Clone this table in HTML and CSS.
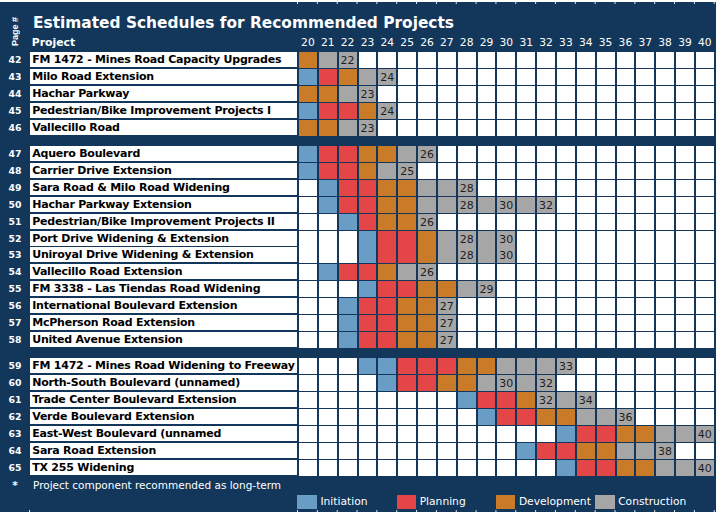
FILE: index.html
```html
<!DOCTYPE html>
<html lang="en">
<head>
<meta charset="utf-8">
<title>Estimated Schedules for Recommended Projects</title>
<link rel="stylesheet" href="styles.css">
</head>
<body>
<div class="topbar"><div class="ticks"></div></div>

<div class="head">
  <div class="pagehdr">Page #</div>
  <h1 class="title">Estimated Schedules for Recommended Projects</h1>
  <div class="hrow">
    <div class="hproj">Project</div>
    <div class="years">
      <span>20</span><span>21</span><span>22</span><span>23</span><span>24</span><span>25</span><span>26</span><span>27</span><span>28</span><span>29</span><span>30</span><span>31</span><span>32</span><span>33</span><span>34</span><span>35</span><span>36</span><span>37</span><span>38</span><span>39</span><span>40</span>
    </div>
  </div>
</div>

<div class="group">
  <div class="row"><span class="pg">42</span><span class="name">FM 1472 - Mines Road Capacity Upgrades</span><div class="cells"><i class="o"></i><i class="g"></i><i class="g">22</i><i></i><i></i><i></i><i></i><i></i><i></i><i></i><i></i><i></i><i></i><i></i><i></i><i></i><i></i><i></i><i></i><i></i><i></i></div></div>
  <div class="row"><span class="pg">43</span><span class="name">Milo Road Extension</span><div class="cells"><i class="b"></i><i class="r"></i><i class="o"></i><i class="g"></i><i class="g">24</i><i></i><i></i><i></i><i></i><i></i><i></i><i></i><i></i><i></i><i></i><i></i><i></i><i></i><i></i><i></i><i></i></div></div>
  <div class="row"><span class="pg">44</span><span class="name">Hachar Parkway</span><div class="cells"><i class="o"></i><i class="o"></i><i class="g"></i><i class="g">23</i><i></i><i></i><i></i><i></i><i></i><i></i><i></i><i></i><i></i><i></i><i></i><i></i><i></i><i></i><i></i><i></i><i></i></div></div>
  <div class="row"><span class="pg">45</span><span class="name">Pedestrian/Bike Improvement Projects I</span><div class="cells"><i class="b"></i><i class="r"></i><i class="r"></i><i class="o"></i><i class="g">24</i><i></i><i></i><i></i><i></i><i></i><i></i><i></i><i></i><i></i><i></i><i></i><i></i><i></i><i></i><i></i><i></i></div></div>
  <div class="row"><span class="pg">46</span><span class="name">Vallecillo Road</span><div class="cells"><i class="o"></i><i class="o"></i><i class="g"></i><i class="g">23</i><i></i><i></i><i></i><i></i><i></i><i></i><i></i><i></i><i></i><i></i><i></i><i></i><i></i><i></i><i></i><i></i><i></i></div></div>
</div>

<div class="group">
  <div class="row"><span class="pg">47</span><span class="name">Aquero Boulevard</span><div class="cells"><i class="b"></i><i class="r"></i><i class="r"></i><i class="o"></i><i class="o"></i><i class="g"></i><i class="g">26</i><i></i><i></i><i></i><i></i><i></i><i></i><i></i><i></i><i></i><i></i><i></i><i></i><i></i><i></i></div></div>
  <div class="row"><span class="pg">48</span><span class="name">Carrier Drive Extension</span><div class="cells"><i class="b"></i><i class="r"></i><i class="r"></i><i class="o"></i><i class="g"></i><i class="g">25</i><i></i><i></i><i></i><i></i><i></i><i></i><i></i><i></i><i></i><i></i><i></i><i></i><i></i><i></i><i></i></div></div>
  <div class="row"><span class="pg">49</span><span class="name">Sara Road &amp; Milo Road Widening</span><div class="cells"><i></i><i class="b"></i><i class="r"></i><i class="r"></i><i class="o"></i><i class="o"></i><i class="g"></i><i class="g"></i><i class="g">28</i><i></i><i></i><i></i><i></i><i></i><i></i><i></i><i></i><i></i><i></i><i></i><i></i></div></div>
  <div class="row"><span class="pg">50</span><span class="name">Hachar Parkway Extension</span><div class="cells"><i></i><i class="b"></i><i class="r"></i><i class="r"></i><i class="o"></i><i class="o"></i><i class="g"></i><i class="g"></i><i class="g">28</i><i class="g"></i><i class="g">30</i><i class="g"></i><i class="g">32</i><i></i><i></i><i></i><i></i><i></i><i></i><i></i><i></i></div></div>
  <div class="row"><span class="pg">51</span><span class="name">Pedestrian/Bike Improvement Projects II</span><div class="cells"><i></i><i></i><i class="b"></i><i class="r"></i><i class="o"></i><i class="o"></i><i class="g">26</i><i></i><i></i><i></i><i></i><i></i><i></i><i></i><i></i><i></i><i></i><i></i><i></i><i></i><i></i></div></div>
  <div class="row"><span class="pg">52</span><span class="name">Port Drive Widening &amp; Extension</span><div class="cells"><i></i><i></i><i></i><i class="b"></i><i class="r"></i><i class="r"></i><i class="o"></i><i class="g"></i><i class="g">28</i><i class="g"></i><i class="g">30</i><i></i><i></i><i></i><i></i><i></i><i></i><i></i><i></i><i></i><i></i></div></div>
  <div class="row"><span class="pg">53</span><span class="name">Uniroyal Drive Widening &amp; Extension</span><div class="cells"><i></i><i></i><i></i><i class="b"></i><i class="r"></i><i class="r"></i><i class="o"></i><i class="g"></i><i class="g">28</i><i class="g"></i><i class="g">30</i><i></i><i></i><i></i><i></i><i></i><i></i><i></i><i></i><i></i><i></i></div></div>
  <div class="row"><span class="pg">54</span><span class="name">Vallecillo Road Extension</span><div class="cells"><i></i><i class="b"></i><i class="r"></i><i class="r"></i><i class="o"></i><i class="g"></i><i class="g">26</i><i></i><i></i><i></i><i></i><i></i><i></i><i></i><i></i><i></i><i></i><i></i><i></i><i></i><i></i></div></div>
  <div class="row"><span class="pg">55</span><span class="name">FM 3338 - Las Tiendas Road Widening</span><div class="cells"><i></i><i></i><i></i><i class="b"></i><i class="r"></i><i class="r"></i><i class="o"></i><i class="o"></i><i class="g"></i><i class="g">29</i><i></i><i></i><i></i><i></i><i></i><i></i><i></i><i></i><i></i><i></i><i></i></div></div>
  <div class="row"><span class="pg">56</span><span class="name">International Boulevard Extension</span><div class="cells"><i></i><i></i><i class="b"></i><i class="r"></i><i class="r"></i><i class="o"></i><i class="o"></i><i class="g">27</i><i></i><i></i><i></i><i></i><i></i><i></i><i></i><i></i><i></i><i></i><i></i><i></i><i></i></div></div>
  <div class="row"><span class="pg">57</span><span class="name">McPherson Road Extension</span><div class="cells"><i></i><i></i><i class="b"></i><i class="r"></i><i class="r"></i><i class="o"></i><i class="o"></i><i class="g">27</i><i></i><i></i><i></i><i></i><i></i><i></i><i></i><i></i><i></i><i></i><i></i><i></i><i></i></div></div>
  <div class="row"><span class="pg">58</span><span class="name">United Avenue Extension</span><div class="cells"><i></i><i></i><i class="b"></i><i class="r"></i><i class="r"></i><i class="o"></i><i class="o"></i><i class="g">27</i><i></i><i></i><i></i><i></i><i></i><i></i><i></i><i></i><i></i><i></i><i></i><i></i><i></i></div></div>
</div>

<div class="group">
  <div class="row"><span class="pg">59</span><span class="name">FM 1472 - Mines Road Widening to Freeway</span><div class="cells"><i></i><i></i><i></i><i class="b"></i><i class="b"></i><i class="r"></i><i class="r"></i><i class="r"></i><i class="o"></i><i class="o"></i><i class="g"></i><i class="g"></i><i class="g"></i><i class="g">33</i><i></i><i></i><i></i><i></i><i></i><i></i><i></i></div></div>
  <div class="row"><span class="pg">60</span><span class="name">North-South Boulevard (unnamed)</span><div class="cells"><i></i><i></i><i></i><i></i><i class="b"></i><i class="r"></i><i class="r"></i><i class="o"></i><i class="o"></i><i class="g"></i><i class="g">30</i><i class="g"></i><i class="g">32</i><i></i><i></i><i></i><i></i><i></i><i></i><i></i><i></i></div></div>
  <div class="row"><span class="pg">61</span><span class="name">Trade Center Boulevard Extension</span><div class="cells"><i></i><i></i><i></i><i></i><i></i><i></i><i></i><i></i><i class="b"></i><i class="r"></i><i class="r"></i><i class="o"></i><i class="g">32</i><i class="g"></i><i class="g">34</i><i></i><i></i><i></i><i></i><i></i><i></i></div></div>
  <div class="row"><span class="pg">62</span><span class="name">Verde Boulevard Extension</span><div class="cells"><i></i><i></i><i></i><i></i><i></i><i></i><i></i><i></i><i></i><i class="b"></i><i class="r"></i><i class="r"></i><i class="o"></i><i class="o"></i><i class="g"></i><i class="g"></i><i class="g">36</i><i></i><i></i><i></i><i></i></div></div>
  <div class="row"><span class="pg">63</span><span class="name">East-West Boulevard (unnamed</span><div class="cells"><i></i><i></i><i></i><i></i><i></i><i></i><i></i><i></i><i></i><i></i><i></i><i></i><i></i><i class="b"></i><i class="r"></i><i class="r"></i><i class="o"></i><i class="o"></i><i class="g"></i><i class="g"></i><i class="g">40</i></div></div>
  <div class="row"><span class="pg">64</span><span class="name">Sara Road Extension</span><div class="cells"><i></i><i></i><i></i><i></i><i></i><i></i><i></i><i></i><i></i><i></i><i></i><i class="b"></i><i class="r"></i><i class="r"></i><i class="o"></i><i class="o"></i><i class="g"></i><i class="g"></i><i class="g">38</i><i></i><i></i></div></div>
  <div class="row"><span class="pg">65</span><span class="name">TX 255 Widening</span><div class="cells"><i></i><i></i><i></i><i></i><i></i><i></i><i></i><i></i><i></i><i></i><i></i><i></i><i></i><i class="b"></i><i class="r"></i><i class="r"></i><i class="o"></i><i class="o"></i><i class="g"></i><i class="g"></i><i class="g">40</i></div></div>
</div>

<div class="foot"><span class="star">*</span><span class="note">Project component recommended as long-term</span></div>

<div class="legend">
  <div class="item"><span class="sw b"></span>Initiation</div>
  <div class="item"><span class="sw r"></span>Planning</div>
  <div class="item"><span class="sw o"></span>Development</div>
  <div class="item"><span class="sw g"></span>Construction</div>
</div>

<div class="bottombar"><div class="ticks"></div></div>
</body>
</html>
```

FILE: styles.css
```css
* {
  box-sizing: border-box;
  margin: 0;
  padding: 0;
}

html,
body {
  width: 716px;
  height: 512px;
  overflow: hidden;
}

body {
  background: #12375b;
  color: #fff;
  font-family: "DejaVu Sans", sans-serif;
  display: flex;
  flex-direction: column;
}

/* top and bottom edge strips */
.topbar {
  height: 4px;
  padding: 2px 0 0 297.3px;
  background: linear-gradient(#fff, #fff) 0 0 / 100% 2px no-repeat;
  flex: none;
}

.ticks {
  height: 2px;
  background: linear-gradient(to right, #dde5ee 0 1px, transparent 1px) 0 0 / 19.85px 2px repeat-x;
}

.bottombar {
  margin-top: auto;
  height: 2px;
  padding-left: 297.3px;
  background: linear-gradient(#dde5ee, #dde5ee) 29px 0 / 1px 2px no-repeat;
  flex: none;
}

/* heading */
.head {
  display: grid;
  grid-template-columns: 30px 1fr;
  grid-template-rows: 27.7px 20.6px;
  flex: none;
}

.pagehdr {
  grid-row: 1 / 3;
  grid-column: 1;
  writing-mode: vertical-rl;
  transform: rotate(180deg);
  font: bold 9px/11px "Liberation Sans", sans-serif;
  justify-self: center;
  align-self: end;
  margin-bottom: 6px;
}

.title {
  grid-row: 1;
  grid-column: 2;
  padding: 9.67px 0 0 3px;
  font: bold 15.4px/18px "DejaVu Sans", sans-serif;
  white-space: nowrap;
}

.hrow {
  grid-row: 2;
  grid-column: 2;
  display: flex;
  align-items: flex-end;
  padding-bottom: 3.3px;
  line-height: 12px;
}

.hproj {
  width: 267px;
  padding-left: 1.8px;
  font-weight: bold;
  font-size: 10.8px;
}

.years {
  margin-left: 2px;
  display: grid;
  grid-template-columns: repeat(21, 17.85px);
  column-gap: 2px;
  font-size: 10.7px;
  text-align: center;
  white-space: nowrap;
}

.years span {
  display: flex;
  justify-content: center;
}

/* table body */
.group {
  display: flex;
  flex-direction: column;
  gap: 1.9px;
  flex: none;
}

.group + .group {
  margin-top: 11.3px;
}

.row {
  display: flex;
  height: 15px;
}

.pg {
  width: 30px;
  text-align: center;
  font: bold 9.3px/15px "DejaVu Sans", sans-serif;
}

.name {
  width: 267px;
  background: #fff;
  color: #000;
  padding-left: 2.2px;
  font: bold 11px/15px "DejaVu Sans", sans-serif;
  letter-spacing: -0.22px;
  white-space: nowrap;
  overflow: hidden;
}

.cells {
  margin-left: 2px;
  display: grid;
  grid-template-columns: repeat(21, 17.85px);
  column-gap: 2px;
}

.cells i {
  background: #fff;
  color: #1e1e1e;
  font: normal 11px/15px "DejaVu Sans", sans-serif;
  text-align: center;
  padding-top: 1px;
  white-space: nowrap;
  display: flex;
  justify-content: center;
}

.b { background: #6a9dc6 !important; }
.r { background: #e44546 !important; }
.o { background: #c97b28 !important; }
.g { background: #a6a6a6 !important; }

/* footnote */
.foot {
  margin-top: 4.7px;
  display: flex;
  line-height: 13px;
  font-size: 10.5px;
  flex: none;
}

.star {
  width: 30px;
  text-align: center;
  font-weight: bold;
}

.note {
  padding-left: 3px;
}

/* legend */
.legend {
  margin-top: 2.6px;
  height: 14.3px;
  padding-left: 297.3px;
  display: flex;
  flex: none;
}

.item {
  width: 99.25px;
  display: flex;
  gap: 3.6px;
  font-size: 10.7px;
  line-height: 14.3px;
  white-space: nowrap;
}

.sw {
  width: 19.5px;
  height: 14.3px;
  flex: none;
}
```
